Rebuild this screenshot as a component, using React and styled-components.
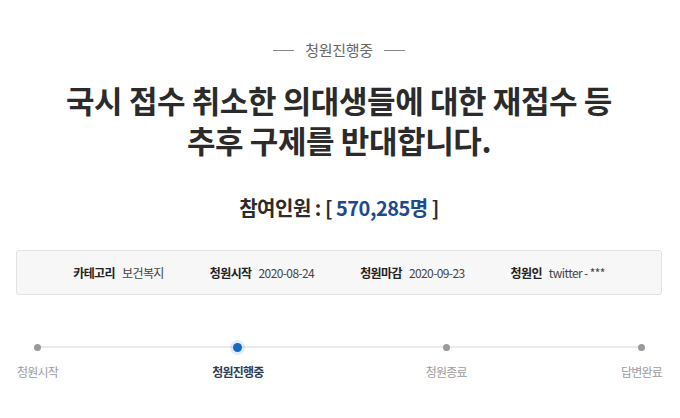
import React from "react";
import styled, { createGlobalStyle } from "styled-components";

const GlobalStyle = createGlobalStyle`
  body {
    margin: 0;
    background: #fff;
    font-family: "Noto Sans CJK KR", "Noto Sans", sans-serif;
    color: #222;
  }
`;

const Page = styled.div`
  width: 680px;
  height: 418px;
  box-sizing: border-box;
  padding: 40px 18px 0 16px;
  overflow: hidden;
`;

const Status = styled.div`
  display: flex;
  align-items: center;
  justify-content: center;
  gap: 11px;
  font-size: 15px;
  line-height: 20px;
  color: #666;
  letter-spacing: -0.3px;

  &::before,
  &::after {
    content: "";
    width: 21px;
    height: 1px;
    background: #888;
  }
`;

const Title = styled.h1`
  margin: 20px 0 0;
  text-align: center;
  font-size: 31px;
  line-height: 40px;
  font-weight: 700;
  letter-spacing: -0.4px;
  color: #2b2b2b;
`;

const Count = styled.div`
  margin-top: 34px;
  text-align: center;
  font-size: 20px;
  line-height: 28px;
  font-weight: 700;
  letter-spacing: -0.5px;
  color: #2b2b2b;
`;

const Number = styled.span`
  color: #1d4a8b;
`;

const InfoBox = styled.ul`
  margin: 28px 0 0;
  padding: 0;
  list-style: none;
  height: 45px;
  box-sizing: border-box;
  display: flex;
  align-items: center;
  justify-content: center;
  gap: 46px;
  background: #f7f7f7;
  border: 1px solid #e2e2e2;
  border-radius: 3px;
  font-size: 12px;
  letter-spacing: -0.6px;
`;

const InfoItem = styled.li`
  display: flex;
  align-items: baseline;
  gap: 7px;
`;

const InfoLabel = styled.strong`
  font-weight: 700;
  color: #222;
`;

const InfoValue = styled.span`
  color: #444;
`;

const Steps = styled.ol`
  position: relative;
  margin: 45px 0 0;
  padding: 0 0 0 1px;
  list-style: none;
  display: flex;
  justify-content: space-between;

  &::before {
    content: "";
    position: absolute;
    left: 22px;
    right: 22px;
    top: 6px;
    height: 2px;
    background: #ebebeb;
  }
`;

const Step = styled.li`
  position: relative;
  display: flex;
  flex-direction: column;
  align-items: center;
  margin-right: ${(p) => p.$shift || 0}px;
`;

const Dot = styled.span`
  width: ${(p) => (p.$active ? 9 : 7)}px;
  height: ${(p) => (p.$active ? 9 : 7)}px;
  margin: ${(p) => (p.$active ? 3 : 4)}px 0;
  border-radius: 50%;
  background: ${(p) => (p.$active ? "#1468c4" : "#9a9a9a")};
  box-shadow: ${(p) => (p.$active ? "0 0 0 3px rgba(20,104,196,0.12)" : "none")};
`;

const StepLabel = styled.span`
  margin-top: 8px;
  font-size: 12px;
  line-height: 18px;
  letter-spacing: -0.8px;
  font-weight: ${(p) => (p.$active ? 700 : 400)};
  color: ${(p) => (p.$active ? "#2e3c55" : "#9c9c9c")};
`;

const info = [
  ["카테고리", "보건복지"],
  ["청원시작", "2020-08-24"],
  ["청원마감", "2020-09-23"],
  ["청원인", "twitter - ***"],
];

const steps = ["청원시작", "청원진행중", "청원종료", "답변완료"];

const App = () => {
  return (
    <>
      <GlobalStyle />
      <Page>
        <Status>청원진행중</Status>
        <Title>
          국시 접수 취소한 의대생들에 대한 재접수 등
          <br />
          추후 구제를 반대합니다.
        </Title>
        <Count>
          참여인원 : [ <Number>570,285명</Number> ]
        </Count>
        <InfoBox>
          {info.map(([label, value]) => (
            <InfoItem key={label}>
              <InfoLabel>{label}</InfoLabel>
              <InfoValue>{value}</InfoValue>
            </InfoItem>
          ))}
        </InfoBox>
        <Steps>
          {steps.map((s, i) => (
            <Step key={s} $shift={i === 1 ? 8 : 0}>
              <Dot $active={i === 1} />
              <StepLabel $active={i === 1}>{s}</StepLabel>
            </Step>
          ))}
        </Steps>
      </Page>
    </>
  );
};

export default App;
